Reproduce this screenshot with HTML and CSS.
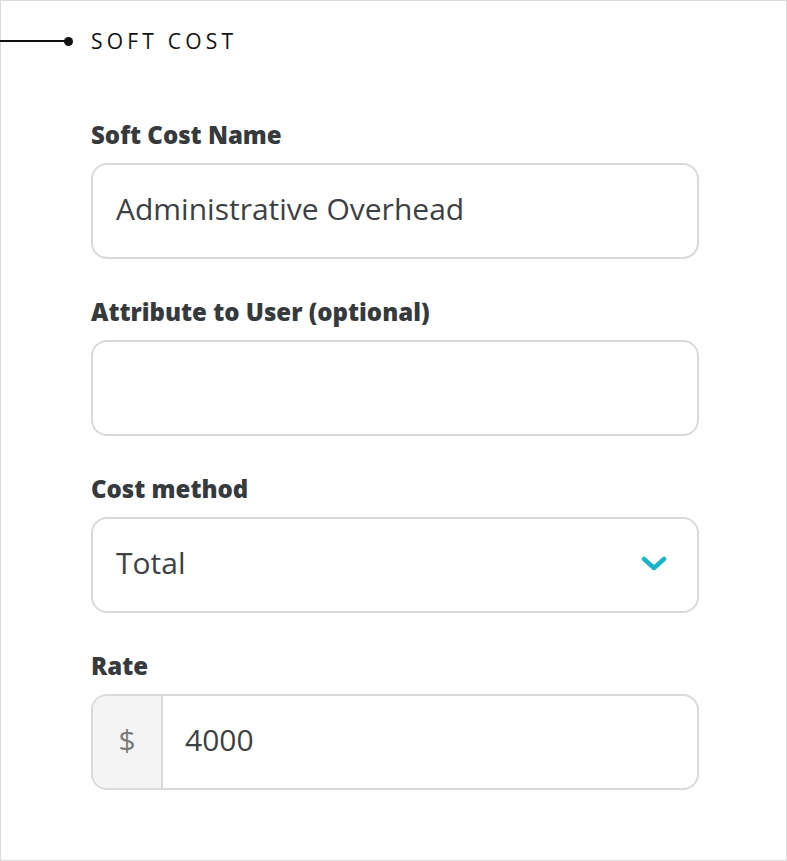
FILE: index.html
```html
<!DOCTYPE html>
<html lang="en">
<head>
<meta charset="utf-8">
<title>Soft Cost</title>
<link rel="stylesheet" href="styles.css">
</head>
<body>
<div class="frame">
  <div class="section-head">
    <span class="rule"></span>
    <span class="dot"></span>
    <h2 class="title">SOFT COST</h2>
  </div>
  <form class="form">
    <div class="field">
      <label class="label">Soft Cost Name</label>
      <div class="box"><span class="value">Administrative Overhead</span></div>
    </div>
    <div class="field">
      <label class="label">Attribute to User (optional)</label>
      <div class="box"></div>
    </div>
    <div class="field">
      <label class="label">Cost method</label>
      <div class="box select">
        <span class="value">Total</span>
        <svg class="chevron" width="26" height="18" viewBox="0 0 26 18"><path d="M3 4 L13 13 L23 4" fill="none" stroke="#1ab3c8" stroke-width="4.5" stroke-linecap="round" stroke-linejoin="round"/></svg>
      </div>
    </div>
    <div class="field">
      <label class="label">Rate</label>
      <div class="box group">
        <span class="addon">$</span>
        <span class="value">4000</span>
      </div>
    </div>
  </form>
</div>
</body>
</html>
```
FILE: styles.css
```css
html, body {
  margin: 0;
  padding: 0;
  background: #fff;
}
.frame {
  box-sizing: border-box;
  width: 787px;
  height: 861px;
  border: 1px solid #dcdcdc;
  font-family: "Open Sans", "Liberation Sans", sans-serif;
  color: #3a3e41;
}
.section-head {
  display: flex;
  align-items: center;
  height: 40px;
  margin-top: 20px;
  margin-left: -1px;
}
.rule {
  display: block;
  width: 68px;
  height: 2px;
  background: #111;
}
.dot {
  display: block;
  width: 9px;
  height: 9px;
  border-radius: 50%;
  background: #111;
  margin-left: -4px;
}
.title {
  margin: 0 0 0 18px;
  font-weight: 400;
  font-size: 21px;
  letter-spacing: 4.2px;
  color: #111;
}
.form {
  display: flex;
  flex-direction: column;
  gap: 39px;
  padding: 60px 0 0 90px;
}
.field {
  display: flex;
  flex-direction: column;
  gap: 14px;
}
.label {
  font-weight: 800;
  font-size: 24px;
  line-height: 28px;
  color: #363a3d;
}
.box {
  box-sizing: border-box;
  width: 608px;
  height: 96px;
  border: 2px solid #dadada;
  border-radius: 16px;
  display: flex;
  align-items: center;
  padding: 0 23px;
}
.value {
  font-size: 30px;
  color: #3d4144;
  margin-bottom: 6px;
}
.select {
  justify-content: space-between;
  padding-right: 30px;
}
.chevron {
  display: block;
  margin-bottom: 2px;
}
.group {
  padding: 0;
  overflow: hidden;
}
.addon {
  box-sizing: border-box;
  width: 70px;
  height: 100%;
  background: #f4f4f4;
  border-right: 2px solid #dadada;
  display: flex;
  align-items: center;
  justify-content: center;
  padding-bottom: 6px;
  font-size: 30px;
  color: #7a7a7a;
  margin-right: 22px;
}
```
